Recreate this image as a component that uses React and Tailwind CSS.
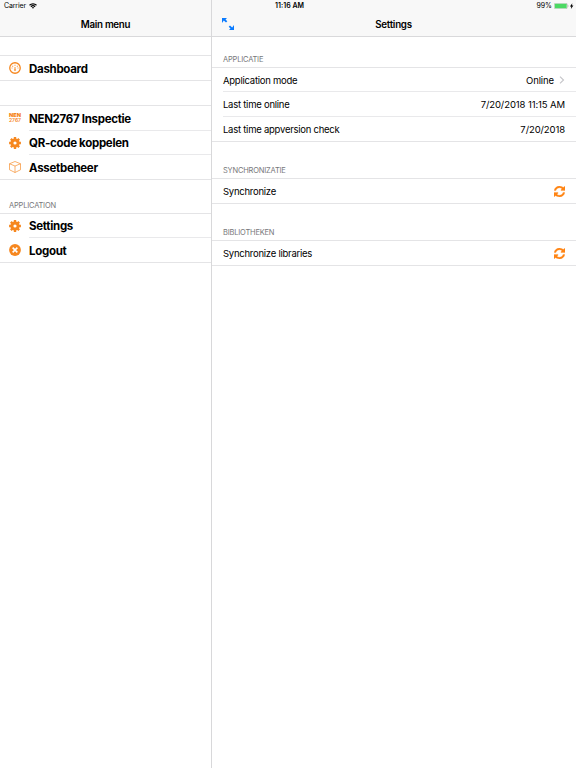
import React from "react";

const ORANGE = "#f6871f";

function GearIcon() {
  return (
    <svg width="12" height="12" viewBox="0 0 24 24" fill="none" stroke={ORANGE}>
      <circle cx="12" cy="12" r="6.200" strokeWidth="6" />
      <path
        d="M12 .2v5M12 18.800v5M.2 12h5M18.800 12h5M3.700 3.700l3.500 3.500M16.800 16.800l3.500 3.500M20.300 3.700l-3.500 3.500M7.200 16.800l-3.500 3.500"
        strokeWidth="4.800"
      />
    </svg>
  );
}

function GaugeIcon() {
  return (
    <svg width="12" height="12" viewBox="0 0 24 24" fill="none" stroke={ORANGE}>
      <circle cx="12" cy="12" r="10.500" strokeWidth="2.600" />
      <path d="M6 8.500h2.500M10.800 6.500h2.400M15.500 8.500H18M5 12h2M17 12h2" strokeWidth="1.600" />
      <path d="M12 10v5" strokeWidth="1.800" />
      <circle cx="12" cy="16" r="1.500" strokeWidth="1.500" />
    </svg>
  );
}

function NenIcon() {
  return (
    <svg width="12" height="12" viewBox="0 0 12 12" fill={ORANGE} className="overflow-visible">
      <text x="0" y="5.300" fontSize="5.400" fontWeight="900" textLength="12" lengthAdjust="spacingAndGlyphs">NEN</text>
      <text x="0" y="10.300" fontSize="5.400" fontWeight="600" textLength="12" lengthAdjust="spacingAndGlyphs">2767</text>
    </svg>
  );
}

function BoxIcon() {
  return (
    <svg width="12" height="12" viewBox="0 0 24 24" fill="none" stroke={ORANGE} strokeWidth="1.300" strokeLinejoin="round">
      <path d="M12 1 23 5.500v12L12 23 1 17.500v-12zM1 5.500 12 10l11-4.500M12 10v13" />
    </svg>
  );
}

function CloseIcon() {
  return (
    <svg width="12" height="12" viewBox="0 0 24 24">
      <circle cx="12" cy="12" r="11.800" fill={ORANGE} />
      <path d="m7.300 7.300 9.400 9.400m0-9.400-9.400 9.400" stroke="#fff" strokeWidth="3.200" />
    </svg>
  );
}

function RefreshIcon() {
  return (
    <svg width="11" height="11" viewBox="0 128 1536 1536" fill="#ff8412" stroke="#ff8412" strokeWidth="40">
      <path d="M1511 1056q0 5-1 7-64 268-268 434.500t-478 166.500q-146 0-282.500-55t-243.500-157l-129 129q-19 19-45 19t-45-19-19-45v-448q0-26 19-45t45-19h448q26 0 45 19t19 45-19 45l-137 137q71 66 161 102t187 36q134 0 250-65t186-179q11-17 53-117 8-23 30-23h192q13 0 22.500 9.500t9.500 22.500zm25-800v448q0 26-19 45t-45 19h-448q-26 0-45-19t-19-45 19-45l138-138q-148-137-349-137-134 0-250 65t-186 179q-11 17-53 117-8 23-30 23h-199q-13 0-22.500-9.500t-9.500-22.500v-7q65-268 270-434.500t480-166.500q146 0 284 55.500t245 156.500l130-129q19-19 45-19t45 19 19 45z" />
    </svg>
  );
}

function ExpandIcon() {
  return (
    <svg width="12" height="12" viewBox="0 0 12 12" fill="#0a7bff">
      <path d="M0 0h5L3.500 1.500 5.300 3.300 4 4.600 1.800 2.500 0 5zM12 12H7l1.500-1.500-1.800-1.800L8 7.400l2.200 2.100L12 7z" />
    </svg>
  );
}

function WifiIcon() {
  return (
    <svg width="8" height="6" viewBox="0 0 16 12" fill="none" stroke="#000" strokeWidth="2.400">
      <path d="M1 4.500a10 10 0 0 1 14 0M3.800 7.500a6 6 0 0 1 8.400 0" />
      <path d="m8 11.500-2.200-2.300a3.200 3.200 0 0 1 4.400 0z" fill="#000" stroke="none" />
    </svg>
  );
}

function BatteryIcon() {
  return (
    <svg width="20" height="6" viewBox="0 0 20 6">
      <rect x="0.250" y="0.250" width="13" height="5.500" rx="1.200" fill="#fff" stroke="#999" strokeWidth="0.500" />
      <rect x="0.800" y="0.700" width="11.900" height="4.600" rx="0.500" fill="#4cd964" />
      <path d="M13.800 2v2q.7-.3.700-1t-.7-1z" fill="#999" />
      <path d="M18.300.2 15.900 3.400h1.400l-.4 2.500 2.500-3.300h-1.400z" fill="#000" />
    </svg>
  );
}

function MenuRow({ icon, label, className }) {
  return (
    <li className="flex pl-[9px]">
      <span className="flex h-[23px] w-5 shrink-0 items-center">{icon}</span>
      <span
        className={`flex flex-1 items-center border-[#e9e9eb] pt-px text-[11.500px] leading-[18px] font-bold tracking-[-0.300px] ${className}`}
      >
        {label}
      </span>
    </li>
  );
}

function SettingRow({ label, className, children }) {
  return (
    <li className="pl-[11px]">
      <div className={`flex items-center justify-between border-[#e9e9eb] pr-[11px] leading-4 ${className}`}>
        <span className="pt-[2px] tracking-[-0.250px]">{label}</span>
        <span className="flex items-center tracking-[-0.100px]">{children}</span>
      </div>
    </li>
  );
}

function Group({ className, children }) {
  return <ul className={`border-y border-[#e4e4e6] ${className || ""}`}>{children}</ul>;
}

function GroupTitle({ className, children }) {
  return (
    <h2 className={`flex items-end pb-[2px] text-[7.500px] leading-[11px] tracking-[-0.200px] text-[#77777a] ${className}`}>
      {children}
    </h2>
  );
}

export default function App() {
  return (
    <div className="flex h-[768px] w-[576px] flex-col overflow-hidden bg-white font-['Inter',sans-serif] text-[9.500px] text-black">
      <div className="flex h-3 shrink-0 bg-[#f8f8f8] text-[7px]">
        <span className="flex w-[212px] items-center gap-[3px] border-r border-[#d8d8da] pl-1 tracking-[-0.150px]">
          Carrier <WifiIcon />
        </span>
        <span className="flex w-[155px] items-center justify-center font-semibold">11:16 AM</span>
        <span className="flex flex-1 items-center justify-end gap-[2px] pr-[2px]">
          99% <BatteryIcon />
        </span>
      </div>

      <div className="flex flex-1">
        <aside className="w-[212px] border-r border-[#d8d8da]">
          <header className="flex h-[25px] items-center justify-center border-b border-[#d9d9db] bg-[#f8f8f8] pt-px text-[9.750px] leading-4 font-semibold tracking-[-0.300px]">
            Main menu
          </header>
          <Group className="mt-[18px]">
            <MenuRow icon={<GaugeIcon />} label="Dashboard" className="h-6" />
          </Group>
          <Group className="mt-6">
            <MenuRow icon={<NenIcon />} label="NEN2767 Inspectie" className="h-[25px] border-b" />
            <MenuRow icon={<GearIcon />} label="QR-code koppelen" className="h-6 border-b" />
            <MenuRow icon={<BoxIcon />} label="Assetbeheer" className="h-6" />
          </Group>
          <GroupTitle className="h-[33px] pl-[9px]">APPLICATION</GroupTitle>
          <Group>
            <MenuRow icon={<GearIcon />} label="Settings" className="h-6 border-b" />
            <MenuRow icon={<CloseIcon />} label="Logout" className="h-6" />
          </Group>
        </aside>

        <main className="flex-1">
          <header className="relative flex h-[25px] items-center justify-center border-b border-[#d9d9db] bg-[#f8f8f8] pt-px pr-px text-[9.750px] leading-4 font-semibold tracking-[-0.250px]">
            <button className="absolute top-[6px] left-[10px]">
              <ExpandIcon />
            </button>
            Settings
          </header>
          <GroupTitle className="h-[30px] pl-[11px]">APPLICATIE</GroupTitle>
          <Group>
            <SettingRow label="Application mode" className="h-6 border-b">
              <span className="pt-[2px]">Online</span>
              <svg className="ml-[5px]" width="6" height="8" viewBox="0 0 6 8" fill="none" stroke="#c4c4c8" strokeWidth="1.100">
                <path d="m1 .7 3.500 3.300L1 7.300" />
              </svg>
            </SettingRow>
            <SettingRow label="Last time online" className="h-[25px] border-b">
              <span className="pt-[2px]">7/20/2018 11:15 AM</span>
            </SettingRow>
            <SettingRow label="Last time appversion check" className="h-6">
              <span className="pt-[2px]">7/20/2018</span>
            </SettingRow>
          </Group>
          <GroupTitle className="h-9 pl-[11px]">SYNCHRONIZATIE</GroupTitle>
          <Group>
            <SettingRow label="Synchronize" className="h-6">
              <RefreshIcon />
            </SettingRow>
          </Group>
          <GroupTitle className="h-9 pl-[11px]">BIBLIOTHEKEN</GroupTitle>
          <Group>
            <SettingRow label="Synchronize libraries" className="h-6">
              <RefreshIcon />
            </SettingRow>
          </Group>
        </main>
      </div>
    </div>
  );
}
